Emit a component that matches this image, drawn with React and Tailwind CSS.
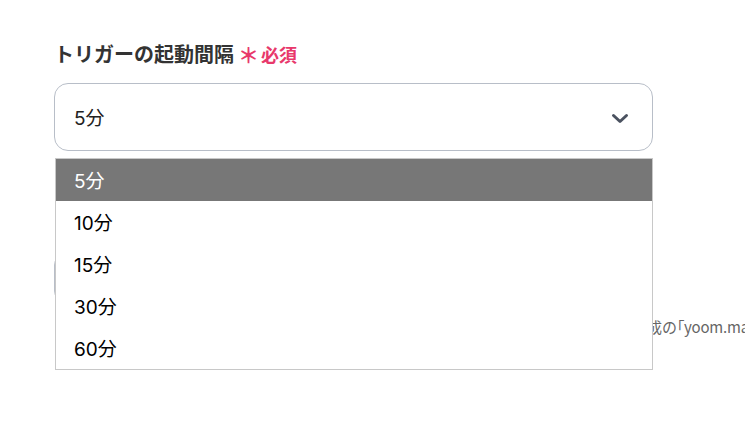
const options = ['5分', '10分', '15分', '30分', '60分'];

const latinFirst = { fontFamily: 'Inter, "Noto Sans CJK JP", sans-serif' };

export default function App() {
  const selected = '5分';

  return (
    <div
      className="w-[745px] h-[427px] overflow-hidden bg-white text-[#333]"
      style={{ fontFamily: '"Noto Sans CJK JP", "Noto Sans", sans-serif' }}
    >
      <div className="relative pl-[54px] pt-[38px] w-[653px]">
        {/* Field: trigger interval */}
        <div className="flex items-center h-[32px]">
          <span className="text-[20px] font-bold leading-none text-[#333]">トリガーの起動間隔</span>
          <span className="ml-[4px] text-[21px] font-bold leading-none text-[#e8386b]">＊</span>
          <span className="ml-[2px] text-[18px] font-bold leading-none text-[#e8386b]">必須</span>
        </div>

        <div className="relative mt-[13px]">
          <button className="w-full h-[68px] flex items-center justify-between pl-[19px] pr-[23px] border border-[#b8bec8] rounded-[14px] bg-white">
            <span className="pt-[4px] text-[19px] text-[#222]" style={latinFirst}>{selected}</span>
            <svg width="18" height="11" viewBox="0 0 18 11" className="translate-y-[1px]">
              <polyline points="2.5,2.5 9,8.5 15.5,2.5" fill="none" stroke="#4b5260" strokeWidth="3" strokeLinecap="round" strokeLinejoin="round" />
            </svg>
          </button>

          {/* Dropdown list (open) */}
          <ul className="absolute left-[1px] right-0 top-[75px] z-10 bg-white border border-[#c8c8c8]" style={latinFirst}>
            {options.map((o) => (
              <li
                key={o}
                className={
                  o === selected
                    ? 'h-[42px] flex items-center pl-[18px] pt-[5px] text-[19px] bg-[#777777] text-white'
                    : 'h-[42px] flex items-center pl-[18px] pt-[5px] text-[19px] text-black'
                }
              >
                {o}
              </li>
            ))}
          </ul>
        </div>

        {/* Field underneath (mostly hidden by the open list) */}
        <div className="mt-[58px] h-[32px] flex items-center">
          <span className="text-[17px] font-bold">メールアドレス</span>
        </div>
        <div className="mt-[14px] h-[46px] w-full border border-[#b8bec8] rounded-[10px]" />
        <p className="mt-[18px] ml-[2px] whitespace-nowrap text-[15px] tracking-[-0.2px] text-[#666] leading-none">
          テスト送信を行うメールアドレスを入力してください。テスト用のアドレスには事前に作成の
          <span className="[font-feature-settings:'palt']">「</span>
          yoom.mail
          <span className="[font-feature-settings:'palt']">」</span>
          のアドレスを使用します。
        </p>
      </div>
    </div>
  );
}
